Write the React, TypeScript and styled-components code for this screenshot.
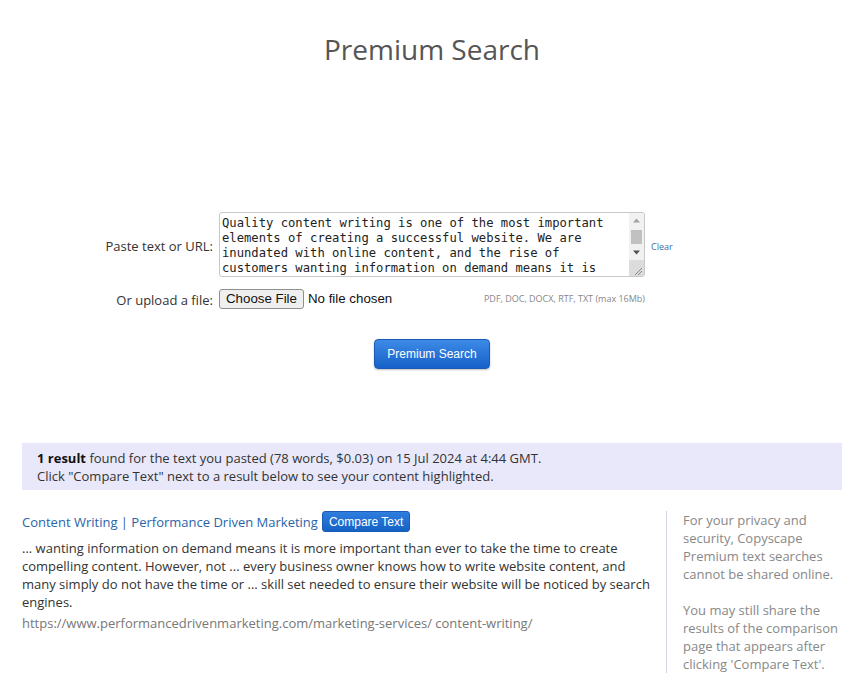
import styled, { createGlobalStyle } from "styled-components";

const GlobalStyle = createGlobalStyle`
  body {
    margin: 0;
    background: #fff;
    font-family: "Open Sans", "Liberation Sans", sans-serif;
    color: #333;
  }
`;

const sampleText =
  "Quality content writing is one of the most important elements of creating a successful website. We are inundated with online content, and the rise of customers wanting information on demand means it is more important than ever to take the time to create compelling content. However, not every business owner knows how to write website content, and many simply do not have the time or skill set needed to ensure their website will be noticed by search engines.";

export default function App() {
  return (
    <>
      <GlobalStyle />
      <Page>
        <Title>Premium Search</Title>
        <SearchForm>
          <Label>Paste text or URL:</Label>
          <TextWrap>
            <TextBox defaultValue={sampleText} />
            <ScrollBar>
              <ScrollArrow>
                <svg width="15" height="15" viewBox="0 0 15 15">
                  <path d="M4 9.5 L7.5 5.5 L11 9.5 Z" fill="#a3a3a3" />
                </svg>
              </ScrollArrow>
              <Thumb />
              <ScrollArrow>
                <svg width="15" height="15" viewBox="0 0 15 15">
                  <path d="M4 5.5 L7.5 9.5 L11 5.5 Z" fill="#505050" />
                </svg>
              </ScrollArrow>
              <Resizer>
                <svg width="15" height="16" viewBox="0 0 15 16">
                  <path d="M13 8 L6 15 M13 11 L9 15" stroke="#8a8a8a" strokeWidth="1" />
                </svg>
              </Resizer>
            </ScrollBar>
          </TextWrap>
          <ClearLink href="#">Clear</ClearLink>

          <Label>Or upload a file:</Label>
          <FileRow>
            <FileButton type="button">Choose File</FileButton>
            <FileName>No file chosen</FileName>
            <FileHint>PDF, DOC, DOCX, RTF, TXT (max 16Mb)</FileHint>
          </FileRow>
          <span />
        </SearchForm>
        <SubmitRow>
          <BlueButton type="button">Premium Search</BlueButton>
        </SubmitRow>

        <ResultBar>
          <b>1 result</b> found for the text you pasted (78 words, $0.03) on 15 Jul 2024 at 4:44 GMT.
          <br />
          Click "Compare Text" next to a result below to see your content highlighted.
        </ResultBar>

        <Results>
          <ResultItem>
            <ResultHead>
              <ResultLink href="#">Content Writing | Performance Driven Marketing</ResultLink>
              <CompareButton type="button">Compare Text</CompareButton>
            </ResultHead>
            <Snippet>
              ... wanting information on demand means it is more important than ever to take the time to create
              compelling content. However, not ... every business owner knows how to write website content, and
              many simply do not have the time or ... skill set needed to ensure their website will be noticed by search
              engines.
            </Snippet>
            <ResultUrl>https://www.performancedrivenmarketing.com/marketing-services/ content-writing/</ResultUrl>
          </ResultItem>
          <SideNote>
            <p>
              For your privacy and security, Copyscape Premium text searches cannot be shared online.
            </p>
            <p>
              You may still share the results of the comparison page that appears after clicking 'Compare Text'.
            </p>
          </SideNote>
        </Results>
      </Page>
    </>
  );
}

const Page = styled.div`
  width: 820px;
  margin: 0 auto;
  padding-top: 30px;
`;

const Title = styled.h1`
  margin: 0;
  text-align: center;
  font-weight: 400;
  font-size: 28px;
  line-height: 38px;
  color: #555;
`;

const SearchForm = styled.div`
  display: grid;
  grid-template-columns: 1fr 426px 1fr;
  column-gap: 6px;
  row-gap: 11px;
  align-items: center;
  margin-top: 144px;
  margin-left: -22px;
  margin-right: -22px;
`;

const Label = styled.label`
  text-align: right;
  font-size: 13px;
  color: #333;
  padding-top: 3px;
`;

const TextWrap = styled.div`
  position: relative;
  width: 426px;
  height: 65px;
`;

const TextBox = styled.textarea`
  display: block;
  box-sizing: border-box;
  width: 426px;
  height: 65px;
  margin: 0;
  padding: 3px 18px 2px 2px;
  border: 1px solid #c8c8c8;
  border-radius: 3px;
  font-family: "DejaVu Sans Mono", "Liberation Mono", monospace;
  font-size: 12.2px;
  line-height: 15px;
  color: #222;
  overflow: hidden;
  resize: none;
`;

const ScrollBar = styled.div`
  position: absolute;
  top: 1px;
  right: 1px;
  bottom: 1px;
  width: 15px;
  display: flex;
  flex-direction: column;
  background: #f1f1f1;
  border-radius: 0 2px 2px 0;
`;

const ScrollArrow = styled.div`
  height: 15px;
  display: flex;
  align-items: center;
  justify-content: center;
`;

const Thumb = styled.div`
  height: 14px;
  margin: 2px 2px 1px;
  background: #c1c1c1;
`;

const Resizer = styled.div`
  margin-top: auto;
  height: 16px;
  background: #dcdcdc;
  display: flex;
`;

const ClearLink = styled.a`
  font-size: 9px;
  color: #3a6ea5;
  text-decoration: none;
  padding-top: 4px;
`;

const FileRow = styled.div`
  display: flex;
  align-items: center;
`;

const FileButton = styled.button`
  font-family: "Liberation Sans", Arial, sans-serif;
  font-size: 13.3px;
  padding: 0 6px;
  height: 20px;
  border: 1px solid #8f8f8f;
  border-radius: 3px;
  background: #efefef;
  color: #111;
`;

const FileName = styled.span`
  margin-left: 4px;
  font-family: "Liberation Sans", Arial, sans-serif;
  font-size: 13.3px;
  color: #111;
`;

const FileHint = styled.span`
  margin-left: auto;
  font-size: 9px;
  color: #888;
`;

const SubmitRow = styled.div`
  display: flex;
  justify-content: center;
  margin-top: 30px;
`;

const BlueButton = styled.button`
  height: 30px;
  padding: 0 12px;
  border: 1px solid #1a5bb5;
  border-radius: 4px;
  background: linear-gradient(#3d8ae6, #1661c9);
  color: #fff;
  font-family: "Liberation Sans", Arial, sans-serif;
  font-size: 12px;
  box-shadow: 0 1px 2px rgba(0, 0, 0, 0.25);
`;

const ResultBar = styled.div`
  margin-top: 74px;
  padding: 6px 15px 5px;
  background: #e8e8fa;
  font-size: 13px;
  line-height: 18px;
  color: #333;

  b {
    font-weight: 700;
    color: #111;
  }
`;

const Results = styled.div`
  display: grid;
  grid-template-columns: 1fr 176px;
  align-items: start;
  margin-top: 21px;
`;

const ResultItem = styled.div`
  padding-right: 12px;
`;

const ResultHead = styled.div`
  display: flex;
  align-items: center;
  gap: 4px;
`;

const ResultLink = styled.a`
  font-size: 13px;
  color: #2a64a8;
  text-decoration: none;
`;

const CompareButton = styled.button`
  height: 21px;
  padding: 0 6px;
  border: 1px solid #1a5bb5;
  border-radius: 3px;
  background: linear-gradient(#2f7ddd, #1562c6);
  color: #fff;
  font-family: "Liberation Sans", Arial, sans-serif;
  font-size: 12px;
`;

const Snippet = styled.p`
  margin: 7px 0 0;
  font-size: 13px;
  line-height: 18px;
  color: #333;
`;

const ResultUrl = styled.p`
  margin: 3px 0 0;
  font-size: 13px;
  line-height: 18px;
  color: #777;
`;

const SideNote = styled.div`
  padding-left: 16px;
  border-left: 1px solid #d5d5e5;
  font-size: 13px;
  line-height: 18px;
  color: #888;

  p {
    margin: 0 0 18px;
  }
  p:last-child {
    margin-bottom: 0;
  }
`;
